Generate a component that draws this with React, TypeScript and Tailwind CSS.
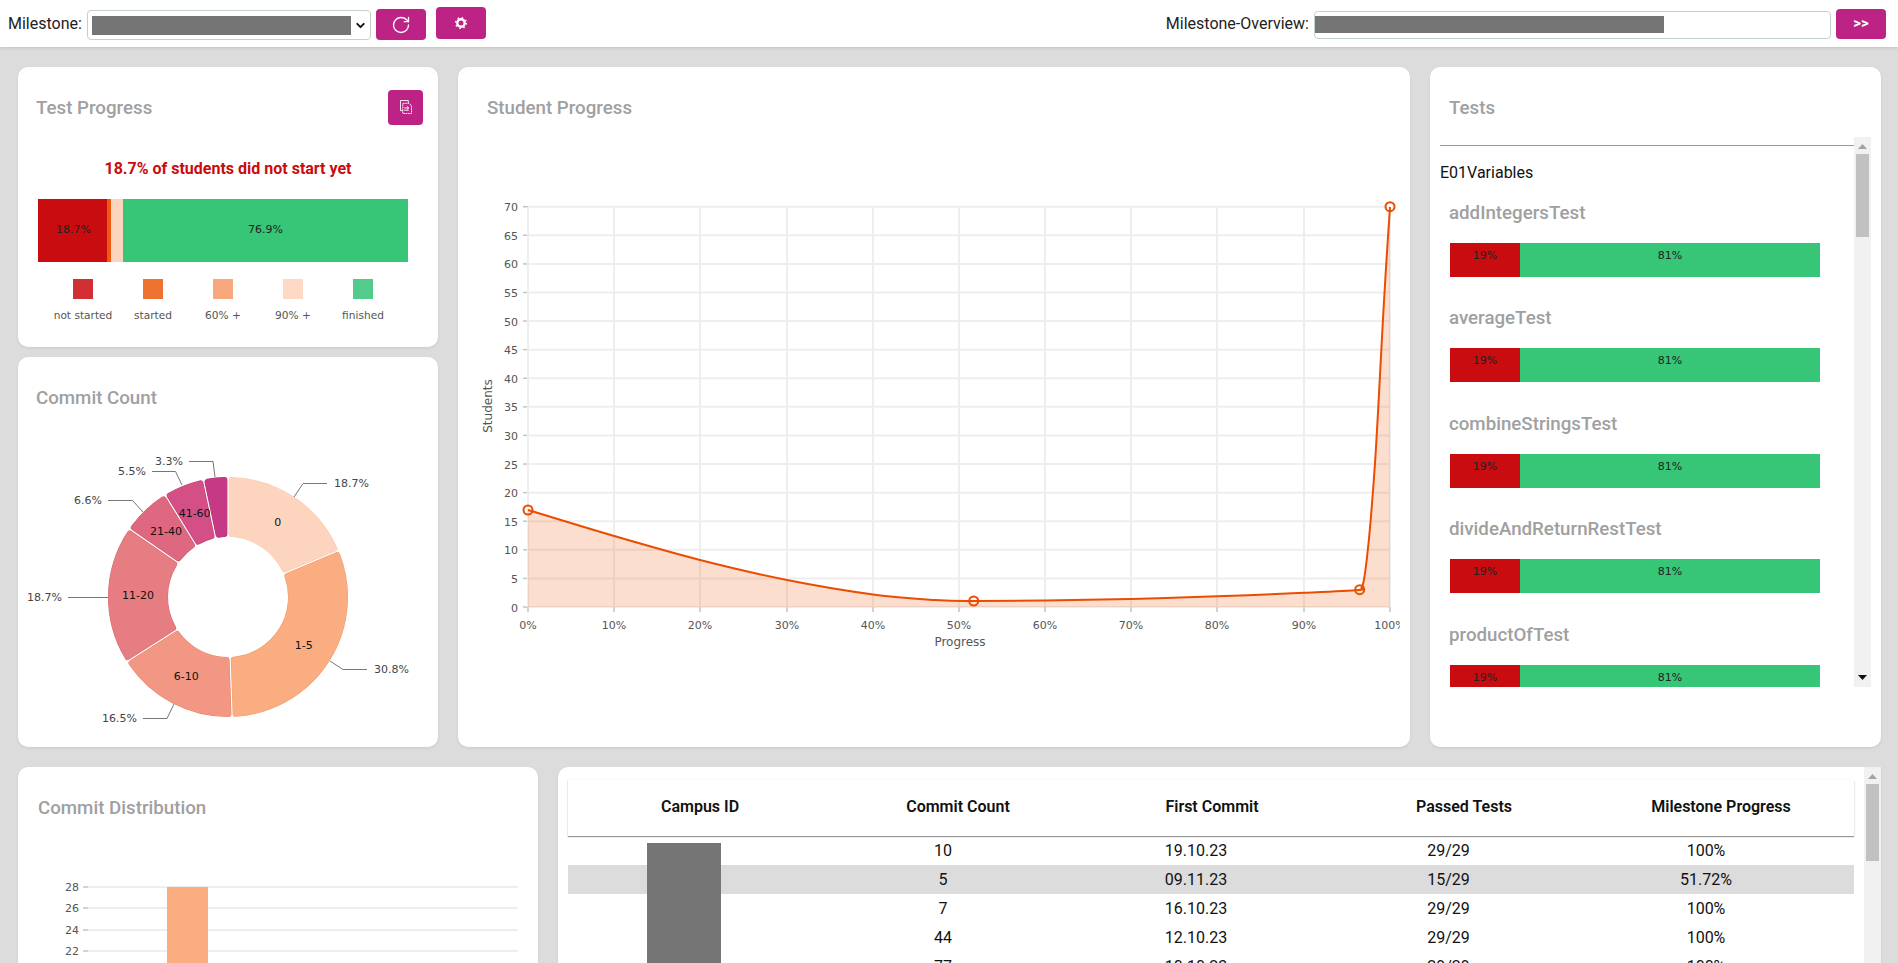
import { ChevronDown, RotateCw } from "lucide-react";

const chartFont = { fontFamily: '"DejaVu Sans", Verdana, sans-serif' };

const legend = [
  { label: "not started", color: "bg-[#d12f33]" },
  { label: "started", color: "bg-[#ee7331]" },
  { label: "60% +", color: "bg-[#f7a87f]" },
  { label: "90% +", color: "bg-[#fdd9c6]" },
  { label: "finished", color: "bg-[#53cc8b]" },
];

const tests = ["addIntegersTest", "averageTest", "combineStringsTest", "divideAndReturnRestTest", "productOfTest"];

const rows = [
  { commits: "10", first: "19.10.23", passed: "29/29", progress: "100%" },
  { commits: "5", first: "09.11.23", passed: "15/29", progress: "51.72%" },
  { commits: "7", first: "16.10.23", passed: "29/29", progress: "100%" },
  { commits: "44", first: "12.10.23", passed: "29/29", progress: "100%" },
  { commits: "77", first: "10.10.23", passed: "29/29", progress: "100%" },
];

const slices = [
  { name: "0", value: 17, color: "#fdd5bf", edge: "#f9cbb2" },
  { name: "1-5", value: 28, color: "#fbad82", edge: "#f09c6c" },
  { name: "6-10", value: 15, color: "#f29783", edge: "#e5836e" },
  { name: "11-20", value: 17, color: "#e67d82", edge: "#d9696e" },
  { name: "21-40", value: 6, color: "#de6880", edge: "#d2586f" },
  { name: "41-60", value: 5, color: "#d34f86", edge: "#c44277" },
  { name: "61+", value: 3, color: "#c63a85", edge: "#b83278" },
];

// label lines of the donut: [line points, text x, text y, anchor, text]
const pieLabels: [string, number, number, "start" | "end", string][] = [
  ["294,497 303,483.5 327,483.5", 334, 483.5, "start", "18.7%"],
  ["330,661 343,669.5 367,669.5", 374, 669.5, "start", "30.8%"],
  ["174,704 167,718.5 143,718.5", 137, 718.5, "end", "16.5%"],
  ["108,597.5 68,597.5", 62, 597.5, "end", "18.7%"],
  ["143,512 132.5,500.5 108,500.5", 102, 500.5, "end", "6.6%"],
  ["182,485 175.5,471.5 152,471.5", 146, 471.5, "end", "5.5%"],
  ["215,477 213,461.5 189,461.5", 183, 461.5, "end", "3.3%"],
];

const curve: [number, number][] = [
  [528, 510], [614, 536], [700, 560], [787, 580], [873, 594.5], [935, 600], [974, 601],
  [1045, 600.4], [1131, 599], [1217, 596.3], [1304, 592.8], [1358, 590], [1361.5, 587.5],
  [1363.5, 582], [1366.7, 560], [1370.7, 520], [1375, 463], [1378.3, 407], [1383.3, 313], [1386.7, 257], [1390, 207],
];

function smoothPath(pts: [number, number][]) {
  let d = `M${pts[0][0]},${pts[0][1]}`;
  for (let i = 0; i < pts.length - 1; i++) {
    const p0 = pts[Math.max(i - 1, 0)];
    const p1 = pts[i];
    const p2 = pts[i + 1];
    const p3 = pts[Math.min(i + 2, pts.length - 1)];
    d += ` C${p1[0] + (p2[0] - p0[0]) / 6},${p1[1] + (p2[1] - p0[1]) / 6} ${p2[0] - (p3[0] - p1[0]) / 6},${p2[1] - (p3[1] - p1[1]) / 6} ${p2[0]},${p2[1]}`;
  }
  return d;
}

function sectorPath(a0: number, a1: number) {
  const cx = 228;
  const cy = 597;
  const R = 117;
  const r = 63;
  const pad = 3.6;
  const pt = (rad: number, a: number) => `${cx + rad * Math.sin(a)},${cy - rad * Math.cos(a)}`;
  const large = a1 - a0 > Math.PI ? 1 : 0;
  return `M${pt(R, a0 + pad / R)} A${R},${R} 0 ${large} 1 ${pt(R, a1 - pad / R)} L${pt(r, a1 - pad / r)} A${r},${r} 0 ${large} 0 ${pt(r, a0 + pad / r)} Z`;
}

function Title({ children }: { children: string }) {
  return <h2 className="pt-[2px] text-[18.72px] leading-[22px] font-medium text-[#a0a0a0]">{children}</h2>;
}

function Card({ className, children }: { className: string; children: React.ReactNode }) {
  return <section className={`bg-white rounded-[10px] shadow-[0_1px_3px_rgba(0,0,0,0.08)] overflow-hidden ${className}`}>{children}</section>;
}

function Arrow({ up, className }: { up?: boolean; className: string }) {
  return (
    <svg width="9" height="5" viewBox="0 0 9 5" className={className}>
      <polygon points={up ? "4.5,0 9,5 0,5" : "0,0 9,0 4.5,5"} fill="currentColor" />
    </svg>
  );
}

function GearIcon() {
  return (
    <svg width="14" height="14" viewBox="0 0 14 14" fill="none" stroke="white">
      <circle cx="7" cy="7" r="3.7" strokeWidth="2.4" />
      <circle cx="7" cy="7" r="5.4" strokeWidth="1.4" strokeDasharray="1.6 2.64" />
    </svg>
  );
}

function ExportIcon() {
  return (
    <svg width="12" height="14" viewBox="0 0 13 15" fill="none" stroke="white" strokeWidth="1">
      <path d="M9 3.5V.5H.5v11H3" />
      <path d="M3 3.5h6.5l3 2.5v8.5H3z" strokeDasharray="2 0.6" />
      <path d="M4.5 8.5h5M7.5 6.8l2 1.7-2 1.7M4.5 11h5" />
    </svg>
  );
}

function TopBar() {
  return (
    <header className="h-[47px] bg-white flex items-center pl-2 pr-3 shadow-[0_1px_3px_rgba(0,0,0,0.12)] relative text-base text-[#222]">
      <span className="mt-px">Milestone:</span>
      <div className="ml-[5px] mt-[3px] w-[284px] h-[30px] border border-[#c4cfcf] rounded bg-white flex items-center pl-1 pr-[3px]">
        <div className="w-[259px] h-[19px] bg-[#757575]" />
        <ChevronDown size={13} strokeWidth={3.5} className="ml-auto text-[#111]" />
      </div>
      <button className="ml-[5px] mt-[2px] w-[50px] h-[31px] rounded bg-[#bc2385] flex items-center justify-center">
        <RotateCw size={20} strokeWidth={1.6} className="text-white" />
      </button>
      <button className="ml-[10px] -mt-px w-[50px] h-[32px] rounded bg-[#bc2385] flex items-center justify-center">
        <GearIcon />
      </button>
      <div className="ml-auto flex items-center">
        <span className="mt-px">Milestone-Overview:</span>
        <div className="ml-[5px] mt-[2px] w-[517px] h-[28px] border border-[#c4cfcf] rounded bg-white flex items-center">
          <div className="w-[349px] h-[17px] bg-[#757575]" />
        </div>
        <button className="ml-[5px] w-[50px] h-[30px] rounded bg-[#bc2385] text-white text-[15px] font-bold">&gt;&gt;</button>
      </div>
    </header>
  );
}

function TestProgress() {
  return (
    <Card className="h-[280px]">
      <div className="h-[80px] pl-[18px] pr-[15px] flex items-center justify-between">
        <Title>Test Progress</Title>
        <button className="w-[35px] h-[35px] rounded bg-[#bc2385] flex items-center justify-center">
          <ExportIcon />
        </button>
      </div>
      <p className="mt-3 h-5 leading-5 text-center text-base font-bold text-[#c80c0f]">18.7% of students did not start yet</p>
      <div className="mt-5 ml-5 w-[370px] h-[63px] flex text-[11px] text-[#222]" style={chartFont}>
        <div className="w-[69px] bg-[#c80c0f] flex items-center justify-center pl-[2px]">18.7%</div>
        <div className="w-[4px] bg-[#ee5a10]" />
        <div className="w-[12px] bg-[#fdd5bf]" />
        <div className="flex-1 bg-[#37c577] flex items-center justify-center">76.9%</div>
      </div>
      <div className="mt-[17px] pl-[30px] flex" style={chartFont}>
        {legend.map((item) => (
          <div key={item.label} className="w-[70px] flex flex-col items-center">
            <div className={`w-5 h-5 ${item.color}`} />
            <span className="mt-2 text-[10.6px] leading-4 text-[#555] whitespace-nowrap">{item.label}</span>
          </div>
        ))}
      </div>
    </Card>
  );
}

function CommitCount() {
  const total = slices.reduce((s, x) => s + x.value, 0);
  let angle = 0;
  return (
    <Card className="h-[390px]">
      <div className="h-[80px] pl-[18px] flex items-center">
        <Title>Commit Count</Title>
      </div>
      <svg width="420" height="300" viewBox="18 437 420 300" className="block" style={chartFont}>
        {slices.map((s) => {
          const a0 = angle;
          const a1 = angle + (s.value / total) * Math.PI * 2;
          angle = a1;
          const mid = (a0 + a1) / 2;
          const d = sectorPath(a0, a1);
          return (
            <g key={s.name}>
              <path d={d} fill={s.edge} stroke={s.edge} strokeWidth="6" strokeLinejoin="round" />
              <path d={d} fill={s.color} stroke={s.color} strokeWidth="5" strokeLinejoin="round" />
              {s.name !== "61+" && (
                <text x={228 + 90 * Math.sin(mid)} y={597 - 90 * Math.cos(mid)} textAnchor="middle" dominantBaseline="central" fontSize="11" fill="#111">
                  {s.name}
                </text>
              )}
            </g>
          );
        })}
        {pieLabels.map(([points, x, y, anchor, text]) => (
          <g key={points}>
            <polyline points={points} fill="none" stroke="#777" strokeWidth="1" />
            <text x={x} y={y} textAnchor={anchor} dominantBaseline="central" fontSize="11" fill="#444">
              {text}
            </text>
          </g>
        ))}
      </svg>
    </Card>
  );
}

function StudentProgress() {
  const y = (v: number) => 607 - (v * 400.3) / 70;
  const ys = Array.from({ length: 15 }, (_, i) => i * 5);
  const xs = [528, 614, 700, 787, 873, 959, 1045, 1131, 1217, 1304, 1390];
  const line = smoothPath(curve);
  return (
    <Card className="w-[952px]">
      <div className="h-[80px] pl-[29px] flex items-center">
        <Title>Student Progress</Title>
      </div>
      <svg width="942" height="520" viewBox="458 147 942 520" className="block" style={chartFont}>
        {ys.map((v) => (
          <g key={v}>
            <line x1={528} x2={1390} y1={y(v)} y2={y(v)} stroke="#eeeeee" strokeWidth="2" />
            <line x1={523} x2={528} y1={y(v)} y2={y(v)} stroke="#c4c4c4" strokeWidth="1.5" />
            <text x={518} y={y(v) + 1} textAnchor="end" dominantBaseline="central" fontSize="11" fill="#555">{v}</text>
          </g>
        ))}
        {xs.map((x, i) => (
          <g key={x}>
            <line x1={x} x2={x} y1={207} y2={607} stroke="#eeeeee" strokeWidth="2" />
            <line x1={x} x2={x} y1={607} y2={612} stroke="#c4c4c4" strokeWidth="1.5" />
            <text x={x} y={625} textAnchor="middle" dominantBaseline="central" fontSize="11" fill="#555">{i * 10}%</text>
          </g>
        ))}
        <path d={`${line} L1390,607 L528,607 Z`} fill="#ee5a10" fillOpacity="0.2" />
        <path d={line} fill="none" stroke="#ea4c02" strokeWidth="2" />
        {[[528, 510], [973.7, 601], [1359.7, 589.7], [1390, 206.7]].map(([cx, cy]) => (
          <circle key={cx} cx={cx} cy={cy} r="4.5" fill="none" stroke="#ea4c02" strokeWidth="2" />
        ))}
        <text x={960} y={642} textAnchor="middle" dominantBaseline="central" fontSize="12" fill="#555">Progress</text>
        <text transform="translate(488 406) rotate(-90)" textAnchor="middle" dominantBaseline="central" fontSize="12" fill="#555">Students</text>
      </svg>
    </Card>
  );
}

function Tests() {
  return (
    <Card className="w-[451px]">
      <div className="h-[70px] pl-[19px] pt-7">
        <Title>Tests</Title>
      </div>
      <div className="ml-[10px] h-[550px] flex overflow-hidden">
        <div className="w-[414px] overflow-hidden">
          <hr className="mt-2 border-t border-[#999]" />
          <p className="mt-[15px] h-6 leading-6 text-base text-[#111]">E01Variables</p>
          <div className="mt-[15px]">
            {tests.map((t) => (
              <div key={t} className="h-[105.4px]">
                <div className="pl-[9px]">
                  <h3 className="h-6 leading-[26px] text-[18.72px] font-medium text-[#a0a0a0]">{t}</h3>
                </div>
                <div className="mt-[19px] ml-[10px] w-[370px] h-[34px] flex text-[11px] leading-4 text-[#222]" style={chartFont}>
                  <div className="w-[70px] bg-[#c80c0f] pt-[5px] text-center">19%</div>
                  <div className="flex-1 bg-[#37c577] pt-[5px] text-center">81%</div>
                </div>
              </div>
            ))}
          </div>
        </div>
        <div className="w-[17px] bg-[#f1f1f1] flex flex-col items-center">
          <Arrow up className="mt-[7px] text-[#a3a3a3]" />
          <div className="mt-[5px] w-[13px] h-[83px] bg-[#c1c1c1]" />
          <Arrow className="mt-auto mb-[7px] text-[#111]" />
        </div>
      </div>
    </Card>
  );
}

function CommitDistribution() {
  const ys: [number, number][] = [[28, 887], [26, 908], [24, 930], [22, 951]];
  return (
    <Card className="w-[520px] rounded-b-none">
      <div className="h-[80px] pl-5 flex items-center">
        <Title>Commit Distribution</Title>
      </div>
      <svg width="520" height="116" viewBox="18 847 520 116" className="block" style={chartFont}>
        {ys.map(([v, py]) => (
          <g key={v}>
            <line x1={88} x2={518} y1={py} y2={py} stroke="#eeeeee" strokeWidth="2" />
            <line x1={83} x2={88} y1={py} y2={py} stroke="#c4c4c4" strokeWidth="1.5" />
            <text x={79} y={py} textAnchor="end" dominantBaseline="central" fontSize="11" fill="#555">{v}</text>
          </g>
        ))}
        <rect x={167} y={887} width={41} height={76} fill="#fbad82" />
      </svg>
    </Card>
  );
}

function StudentTable() {
  return (
    <Card className="flex-1 flex rounded-r-none rounded-b-none">
      <div className="flex-1 px-[10px] pt-[13px] relative">
        <div className="h-[56px] pb-[2px] grid grid-cols-[264px_252px_256px_248px_266px] items-center text-center text-base font-semibold text-[#111] shadow-[0_1px_1px_rgba(0,0,0,0.4),0_0_2px_rgba(0,0,0,0.06)]">
          <span>Campus ID</span>
          <span>Commit Count</span>
          <span>First Commit</span>
          <span>Passed Tests</span>
          <span>Milestone Progress</span>
        </div>
        {rows.map((r, i) => (
          <div
            key={i}
            className={`h-[29px] grid grid-cols-[232px_286px_220px_285px_263px] items-center text-center text-base text-[#111] ${i === 1 ? "bg-[#dcdcdc]" : ""}`}
          >
            <span />
            <span>{r.commits}</span>
            <span>{r.first}</span>
            <span>{r.passed}</span>
            <span className="pr-[33px]">{r.progress}</span>
          </div>
        ))}
        {/* redacted ids */}
        <div className="absolute left-[89px] top-[76px] w-[74px] h-[120px] bg-[#757575]" />
      </div>
      <div className="w-[17px] bg-[#f1f1f1] flex flex-col items-center">
        <Arrow up className="mt-[7px] text-[#a3a3a3]" />
        <div className="mt-[5px] w-[13px] h-[77px] bg-[#c1c1c1]" />
      </div>
    </Card>
  );
}

export default function App() {
  return (
    <div className="w-[1898px] h-[963px] overflow-hidden bg-[#dcdcdc]" style={{ fontFamily: 'Roboto, "Liberation Sans", sans-serif' }}>
      <TopBar />
      <main className="pl-[18px] pr-[17px]">
        <div className="mt-5 h-[680px] flex gap-5">
          <div className="w-[420px] flex flex-col gap-[10px]">
            <TestProgress />
            <CommitCount />
          </div>
          <StudentProgress />
          <Tests />
        </div>
        <div className="mt-5 h-[196px] flex gap-5">
          <CommitDistribution />
          <StudentTable />
        </div>
      </main>
    </div>
  );
}
